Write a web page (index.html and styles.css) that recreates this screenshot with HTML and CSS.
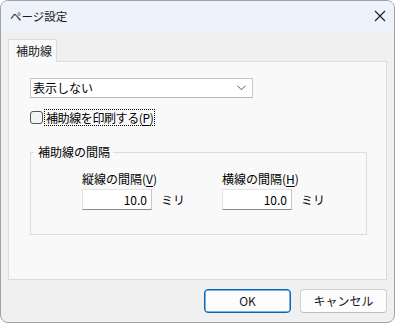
FILE: index.html
```html
<!DOCTYPE html>
<html lang="ja">
<head>
<meta charset="utf-8">
<link rel="stylesheet" href="styles.css">
</head>
<body>
<div class="window">
  <div class="titlebar">
    <span class="title">ページ設定</span>
    <svg class="close" width="12" height="12" viewBox="0 0 12 12"><path d="M1 1 L11 11 M11 1 L1 11" stroke="#1a1a1a" stroke-width="1.1" fill="none"/></svg>
  </div>
  <div class="content">
    <div class="tabs"><div class="tab">補助線</div></div>
    <div class="panel">
      <div class="select">
        <span>表示しない</span>
        <svg width="9" height="6" viewBox="0 0 9 6"><path d="M0.5 0.8 L4.5 4.8 L8.5 0.8" stroke="#555" stroke-width="1" fill="none"/></svg>
      </div>
      <div class="check-row">
        <span class="checkbox"></span>
        <span class="check-label">補助線を印刷する(<u>P</u>)</span>
      </div>
      <fieldset class="group">
        <legend>補助線の間隔</legend>
        <div class="cols">
          <div class="col">
            <div class="lbl">縦線の間隔(<u>V</u>)</div>
            <div class="field-row"><div class="input">10.0</div><span class="unit">ミリ</span></div>
          </div>
          <div class="col">
            <div class="lbl">横線の間隔(<u>H</u>)</div>
            <div class="field-row"><div class="input">10.0</div><span class="unit">ミリ</span></div>
          </div>
        </div>
      </fieldset>
    </div>
    <div class="footer">
      <button class="btn primary">OK</button>
      <button class="btn">キャンセル</button>
    </div>
  </div>
</div>
</body>
</html>
```

FILE: styles.css
```css
html, body {
  margin: 0;
  padding: 0;
  background: #ffffff;
}
body {
  font-family: "Noto Sans CJK JP", "Noto Sans", sans-serif;
  font-size: 12px;
  color: #000;
}
.window {
  width: 395px;
  height: 323px;
  box-sizing: border-box;
  border: 1px solid #a3a3a3;
  border-radius: 8px;
  overflow: hidden;
  display: flex;
  flex-direction: column;
  background: #f0f0f0;
}
.titlebar {
  height: 30px;
  flex: none;
  background: #eef2fa;
  display: flex;
  align-items: center;
  justify-content: space-between;
  padding: 0 8px 0 9px;
}
.title {
  font-size: 11.5px;
  line-height: 14px;
  color: #1a1a1a;
}
.content {
  flex: 1;
  display: flex;
  flex-direction: column;
  padding: 8px 7px 9px 7px;
}
.tabs {
  display: flex;
  position: relative;
  z-index: 1;
  margin-bottom: -1px;
}
.tab {
  width: 49px;
  height: 23px;
  box-sizing: border-box;
  border: 1px solid #dcdcdc;
  border-bottom: none;
  background: #f9f9f9;
  font-size: 12px;
  line-height: 21px;
  padding-left: 7px;
  color: #1a1a1a;
}
.panel {
  flex: 1;
  border: 1px solid #dcdcdc;
  background: #f9f9f9;
  padding: 16px 0 0 21px;
  display: flex;
  flex-direction: column;
  align-items: flex-start;
}
.select {
  width: 223px;
  height: 20px;
  box-sizing: border-box;
  border: 1px solid #c8c8c8;
  border-bottom-color: #b8b8b8;
  background: #ffffff;
  display: flex;
  align-items: center;
  justify-content: space-between;
  padding: 0 6px 0 2px;
  line-height: 18px;
}
.check-row {
  display: flex;
  align-items: center;
  margin-top: 11px;
  height: 17px;
}
.checkbox {
  width: 13px;
  height: 13px;
  box-sizing: border-box;
  border: 1px solid #555;
  border-radius: 3px;
  background: #f4f4f4;
}
.check-label {
  margin-left: 1px;
  border: 1px dotted #000;
  padding: 0 1px;
  line-height: 15px;
  letter-spacing: -0.4px;
}
u {
  text-decoration: underline;
  text-underline-offset: 2px;
}
.group {
  margin: 18px 0 0 0;
  width: 337px;
  box-sizing: border-box;
  border: 1px solid #dcdcdc;
  padding: 12px 0 24px 51px;
}
.group legend {
  padding: 0 3px 0 4px;
  line-height: 16px;
  margin-left: -48px;
}
.cols {
  display: grid;
  grid-template-columns: 140px 140px;
}
.col {
  display: flex;
  flex-direction: column;
}
.lbl {
  line-height: 14px;
  margin-bottom: 3px;
}
.field-row {
  display: flex;
  align-items: center;
}
.input {
  width: 70px;
  height: 21px;
  box-sizing: border-box;
  background: #fff;
  border: 1px solid #e3e3e3;
  border-bottom: 1px solid #8a8a8a;
  border-right-color: #c8c8c8;
  text-align: right;
  padding-right: 4px;
  line-height: 19px;
}
.unit {
  margin-left: 9px;
}
.footer {
  display: flex;
  justify-content: flex-end;
  gap: 9px;
  margin-top: 9px;
}
.btn {
  width: 87px;
  height: 24px;
  box-sizing: border-box;
  border: 1px solid #d0d0d0;
  border-bottom-color: #bcbcbc;
  border-radius: 4px;
  background: #fdfdfd;
  font-family: "Noto Sans CJK JP", "Noto Sans", sans-serif;
  font-size: 12px;
  color: #1a1a1a;
  padding: 0;
  line-height: 20px;
}
.btn.primary {
  border: 1px solid #0067c0;
  box-shadow: inset 0 0 0 0.5px #0067c0;
}
```
